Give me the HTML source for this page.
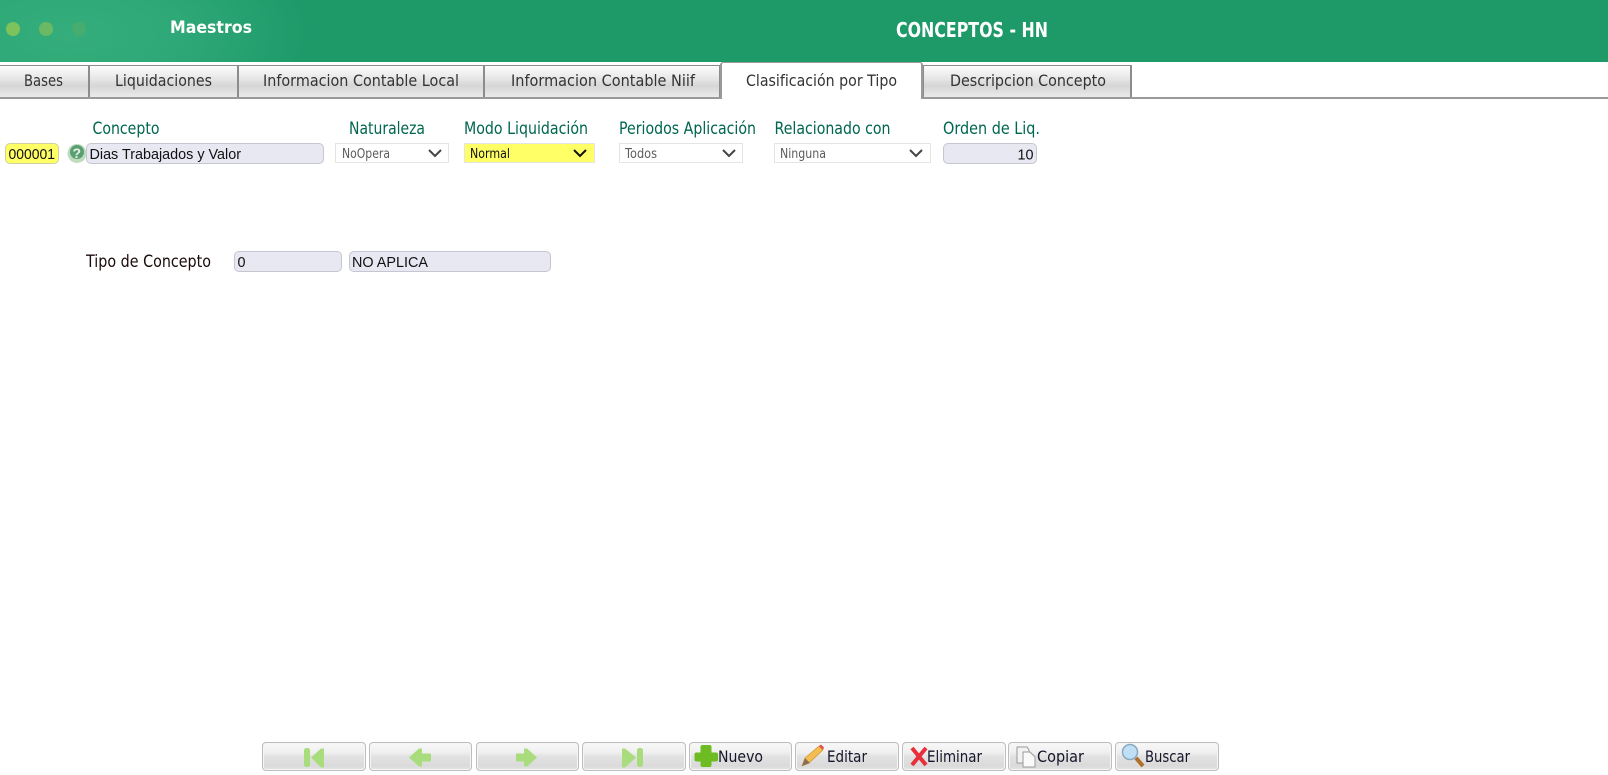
<!DOCTYPE html>
<html lang="es"><head><meta charset="utf-8"><title>Conceptos - HN</title>
<style>
html,body{margin:0;padding:0;width:1608px;height:775px;overflow:hidden;background:#fff}
.a{position:absolute;box-sizing:border-box}
.hdr{left:0;top:0;width:1608px;height:62px;background:#1e9a69}
.glow{left:0;top:0;width:340px;height:62px;background:radial-gradient(ellipse 240px 110px at 70px 34px,rgba(60,180,130,.75) 0%,rgba(60,180,130,.55) 45%,rgba(60,180,130,0) 100%)}
.dot{width:14px;height:14px;border-radius:50%;top:22px}
.tab{top:65px;height:33px;border:2px solid #8c8c8c;border-bottom:0;border-top-width:1px;background:linear-gradient(#fcfcfc 0%,#ececec 30%,#d6d6d6 62%,#ececec 100%)}
.line{left:0;top:97px;width:1608px;height:2px;background:#9a9a9a}
.act{left:720px;top:62px;width:203px;height:37px;background:#fff;border:2px solid #9a9a9a;border-bottom:0;border-radius:3px 3px 0 0;border-top-width:1px}
.inp{background:#e8e8f2;border:1px solid #c6c6d0;border-radius:5px}
.sel{background:#fff;border:1px solid #e4e4e4}
.btn{top:742px;height:29px;width:103px;border:1px solid #bdbdbd;border-radius:4px;background:linear-gradient(#f8f8f8 0%,#efefef 35%,#e2e2e2 50%,#dadada 85%,#e6e6e6 100%);box-shadow:inset 0 0 0 1px #f6f6f6}
svg.t{position:absolute;left:0;top:0}
</style></head><body>
<div class="a hdr"></div><div class="a glow"></div>
<div class="a dot" style="left:6px;background:#7ec25c"></div>
<div class="a dot" style="left:39px;background:#6cb964"></div>
<div class="a dot" style="left:72px;background:#47ad6f"></div>

<div class="a tab" style="left:-2px;width:92px"></div>
<div class="a tab" style="left:88px;width:151px"></div>
<div class="a tab" style="left:237px;width:248px"></div>
<div class="a tab" style="left:483px;width:238px"></div>
<div class="a tab" style="left:922px;width:210px"></div>
<div class="a line"></div>
<div class="a act"></div>

<div class="a" style="left:5px;top:143px;width:54px;height:21px;background:#ffff66;border:1px solid #cfcfa0;border-radius:5px"></div>
<div class="a inp" style="left:86px;top:143px;width:238px;height:21px"></div>
<div class="a sel" style="left:335px;top:143px;width:114px;height:20px"></div>
<div class="a sel" style="left:464px;top:143px;width:131px;height:20px;background:#ffff66"></div>
<div class="a sel" style="left:619px;top:143px;width:124px;height:20px"></div>
<div class="a sel" style="left:774px;top:143px;width:157px;height:20px"></div>
<div class="a inp" style="left:943px;top:143px;width:94px;height:21px"></div>
<div class="a inp" style="left:234px;top:251px;width:108px;height:21px"></div>
<div class="a inp" style="left:349px;top:251px;width:202px;height:21px"></div>

<div class="a btn" style="left:262px;width:104px"></div>
<div class="a btn" style="left:369px"></div>
<div class="a btn" style="left:476px"></div>
<div class="a btn" style="left:582px;width:104px"></div>
<div class="a btn" style="left:689px"></div>
<div class="a btn" style="left:795px;width:104px"></div>
<div class="a btn" style="left:902px;width:104px"></div>
<div class="a btn" style="left:1008px;width:104px"></div>
<div class="a btn" style="left:1115px;width:104px"></div>

<svg class="t" width="1608" height="775" viewBox="0 0 1608 775" xmlns="http://www.w3.org/2000/svg">
<g font-family="'DejaVu Sans',sans-serif" font-weight="bold" fill="#fff">
<text x="170" y="33" font-size="17" textLength="82" lengthAdjust="spacingAndGlyphs">Maestros</text>
<text x="896" y="37" font-size="20" textLength="152" lengthAdjust="spacingAndGlyphs">CONCEPTOS - HN</text>
</g>
<g font-family="'DejaVu Sans',sans-serif" font-size="16" fill="#333">
<text x="24" y="86" textLength="39" lengthAdjust="spacingAndGlyphs">Bases</text>
<text x="115" y="86" textLength="97" lengthAdjust="spacingAndGlyphs">Liquidaciones</text>
<text x="263" y="86" textLength="196" lengthAdjust="spacingAndGlyphs">Informacion Contable Local</text>
<text x="511" y="86" textLength="184" lengthAdjust="spacingAndGlyphs">Informacion Contable Niif</text>
<text x="746" y="86" textLength="151" lengthAdjust="spacingAndGlyphs">Clasificación por Tipo</text>
<text x="950" y="86" textLength="156" lengthAdjust="spacingAndGlyphs">Descripcion Concepto</text>
</g>
<g font-family="'DejaVu Sans',sans-serif" font-size="17" fill="#00664f">
<text x="92.5" y="134" textLength="67" lengthAdjust="spacingAndGlyphs">Concepto</text>
<text x="349" y="134" textLength="76" lengthAdjust="spacingAndGlyphs">Naturaleza</text>
<text x="464" y="134" textLength="124" lengthAdjust="spacingAndGlyphs">Modo Liquidación</text>
<text x="619" y="134" textLength="137" lengthAdjust="spacingAndGlyphs">Periodos Aplicación</text>
<text x="774.5" y="134" textLength="116" lengthAdjust="spacingAndGlyphs">Relacionado con</text>
<text x="943" y="134" textLength="97" lengthAdjust="spacingAndGlyphs">Orden de Liq.</text>
</g>
<text x="86" y="267" font-family="'DejaVu Sans',sans-serif" font-size="17" fill="#1a0a0a" textLength="125" lengthAdjust="spacingAndGlyphs">Tipo de Concepto</text>
<g font-family="'Liberation Sans',sans-serif" font-size="15" fill="#111">
<text x="8.500" y="159" textLength="46.500" lengthAdjust="spacingAndGlyphs">000001</text>
<text x="89.500" y="159" textLength="151.500" lengthAdjust="spacingAndGlyphs">Dias Trabajados y Valor</text>
<text x="1017.500" y="159.500" textLength="16" lengthAdjust="spacingAndGlyphs">10</text>
<text x="237.500" y="267" textLength="8" lengthAdjust="spacingAndGlyphs">0</text>
<text x="352" y="267" textLength="76" lengthAdjust="spacingAndGlyphs">NO APLICA</text>
</g>
<g font-family="'DejaVu Sans',sans-serif" font-size="13" fill="#5c5c5c">
<text x="342" y="158" textLength="48" lengthAdjust="spacingAndGlyphs">NoOpera</text>
<text x="470" y="158" textLength="40" lengthAdjust="spacingAndGlyphs" fill="#111">Normal</text>
<text x="625" y="158" textLength="32" lengthAdjust="spacingAndGlyphs">Todos</text>
<text x="780" y="158" textLength="46" lengthAdjust="spacingAndGlyphs">Ninguna</text>
</g>
<g fill="none" stroke="#444" stroke-width="2">
<path d="M429 150l6 6 6-6"/>
<path d="M574 150l6 6 6-6" stroke="#111"/>
<path d="M723 150l6 6 6-6"/>
<path d="M910 150l6 6 6-6"/>
</g>
<circle cx="77" cy="153.500" r="9.500" fill="#bfdcbf"/>
<circle cx="77" cy="152" r="7" fill="#5a9f72"/>
<text x="72.500" y="158" font-family="'Liberation Sans',sans-serif" font-weight="bold" font-size="14" fill="#e8f4e8">?</text>
<g font-family="'DejaVu Sans',sans-serif" font-size="16" fill="#15152a">
<text x="718" y="762" textLength="45" lengthAdjust="spacingAndGlyphs">Nuevo</text>
<text x="827" y="762" textLength="40" lengthAdjust="spacingAndGlyphs">Editar</text>
<text x="927" y="762" textLength="55" lengthAdjust="spacingAndGlyphs">Eliminar</text>
<text x="1037" y="762" textLength="47" lengthAdjust="spacingAndGlyphs">Copiar</text>
<text x="1145" y="762" textLength="45" lengthAdjust="spacingAndGlyphs">Buscar</text>
</g>
<g fill="#a9dc7c">
<rect x="304" y="748" width="6" height="19" rx="2.500"/><path d="M311 757.500l10-9h3v19h-3z"/>
<path d="M409 757.500l10-9h3v5h8a1 1 0 0 1 1 1v6a1 1 0 0 1-1 1h-8v5h-3z"/>
<path d="M537 757.500l-10-9h-3v5h-7a1 1 0 0 0-1 1v6a1 1 0 0 0 1 1h7v5h3z"/>
<rect x="637" y="748" width="6" height="19" rx="2.500"/><path d="M636 757.500l-11-9h-3v19h3z"/>
</g>
<path d="M702.500 745h7a2 2 0 0 1 2 2v5.500h4.500a2 2 0 0 1 2 2v5a2 2 0 0 1-2 2h-4.500v3.500a2 2 0 0 1-2 2h-7a2 2 0 0 1-2-2v-3.500h-4a2 2 0 0 1-2-2v-5a2 2 0 0 1 2-2h4v-5.500a2 2 0 0 1 2-2z" fill="#6cbc22"/>
<path d="M802 766l3-8 14-12 4 4-14 13z" fill="#f4bd50" stroke="#c98a24" stroke-width=".6"/>
<path d="M802 766l3-8 5 5z" fill="#8d6f4d"/>
<path d="M819 746l2-1.500 3 3-1 2.500z" fill="#e0505a"/>
<path d="M912 748l14 17M926 748l-14 17" stroke="#e8303a" stroke-width="4" fill="none"/>
<path d="M1017 747h10l2 3v13h-12z" fill="#f2f2f2" stroke="#999"/>
<path d="M1023 752h7l5 5v10h-12z" fill="#fafafa" stroke="#999"/>
<path d="M1136 758l7 8" stroke="#b0702c" stroke-width="4"/>
<circle cx="1130" cy="752" r="7.500" fill="#bfe0f4" stroke="#8aa8c0" stroke-width="1.500"/>
</svg>
</body></html>
